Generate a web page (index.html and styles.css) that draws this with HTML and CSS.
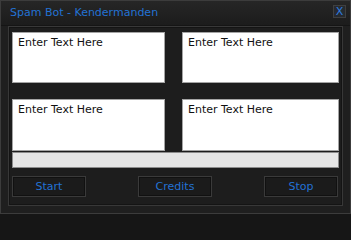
FILE: index.html
```html
<!DOCTYPE html>
<html>
<head>
<meta charset="utf-8">
<link rel="stylesheet" href="styles.css">
</head>
<body>
<div class="window">
  <div class="titlebar">
    <span class="title">Spam Bot - Kendermanden</span>
    <span class="close">X</span>
  </div>
  <div class="panel">
    <div class="boxes">
      <div class="textbox">Enter Text Here</div>
      <div class="textbox">Enter Text Here</div>
      <div class="textbox">Enter Text Here</div>
      <div class="textbox">Enter Text Here</div>
    </div>
    <div class="progress"></div>
    <div class="buttons">
      <div class="btn">Start</div>
      <div class="btn">Credits</div>
      <div class="btn">Stop</div>
    </div>
  </div>
</div>
</body>
</html>
```
FILE: styles.css
```css
html, body {
  margin: 0;
  padding: 0;
  background: #161616;
}
.window {
  width: 351px;
  height: 214px;
  box-sizing: border-box;
  border: 1px solid #3c3c3c;
  background: #1f1f1f;
  font-family: "DejaVu Sans", Verdana, sans-serif;
  display: flex;
  flex-direction: column;
}
.titlebar {
  height: 24px;
  display: flex;
  align-items: center;
  justify-content: space-between;
  padding: 0 4px 0 9px;
  background: linear-gradient(#262626, #1c1c1c);
  border-bottom: 1px solid #151515;
}
.title {
  color: #2372d4;
  font-size: 11px;
  letter-spacing: 0;
  margin-top: -1px;
}
.close {
  width: 11px;
  height: 11px;
  border: 1px solid #3f3f3f;
  background: #262a30;
  color: #2f7fe0;
  font-size: 11px;
  line-height: 11px;
  text-align: center;
  margin-top: -4px;
}
.panel {
  margin: 0 7px 7px 7px;
  flex: 1;
  border: 1px solid #383838;
  box-shadow: inset 0 0 0 1px #141414;
  background: #1d1d1d;
  padding: 5px 3px 0 3px;
  display: flex;
  flex-direction: column;
}
.boxes {
  display: grid;
  grid-template-columns: 153px 157px;
  grid-template-rows: 51px 52px;
  column-gap: 17px;
  row-gap: 16px;
}
.textbox {
  background: #ffffff;
  border: 1px solid #a4a4a4;
  color: #111;
  font-size: 11px;
  padding: 3px 5px;
}
.progress {
  margin-top: 1px;
  height: 14px;
  background: #e5e5e5;
  border: 1px solid #8c8c8c;
}
.buttons {
  margin-top: 8px;
  display: flex;
  justify-content: space-between;
  padding-right: 1px;
}
.btn {
  width: 72px;
  height: 19px;
  border: 1px solid #3a3a3a;
  box-shadow: inset 0 0 0 1px #111;
  background: #1b1b1b;
  color: #2372d4;
  font-size: 11px;
  display: flex;
  align-items: center;
  justify-content: center;
}
```
